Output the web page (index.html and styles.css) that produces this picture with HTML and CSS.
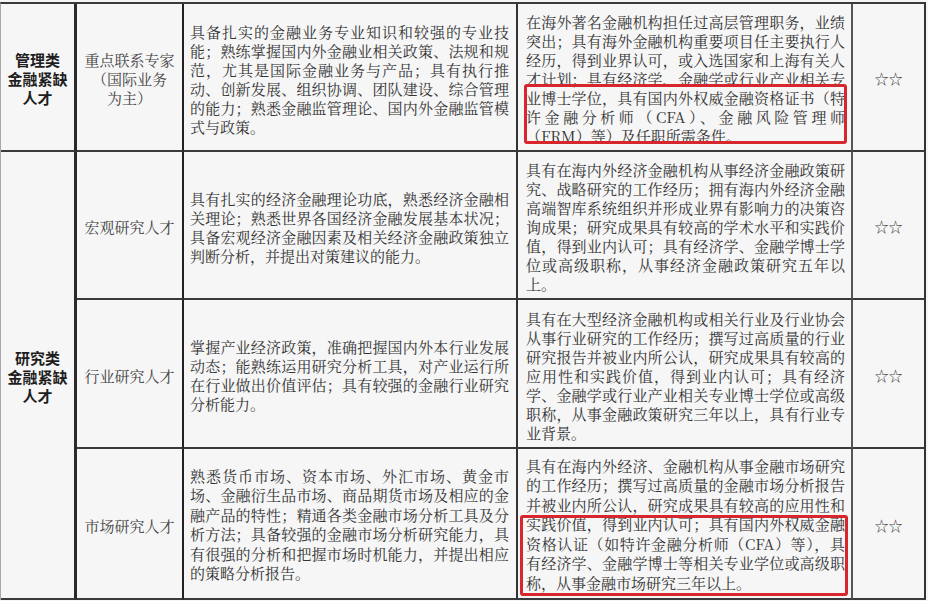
FILE: index.html
```html
<!DOCTYPE html>
<html lang="zh-CN">
<head>
<meta charset="utf-8">
<title>金融紧缺人才</title>
<link rel="stylesheet" href="styles.css">
</head>
<body>
<div class="sheet">
  <div class="cell cat"><span>管理类</span><span>金融紧缺</span><span>人才</span></div>
  <div class="cell name"><span>重点联系专家</span><span>（国际业务</span><span>为主）</span></div>
  <div class="cell desc">
    <span class="ln">具备扎实的金融业务专业知识和较强的专业技</span>
    <span class="ln">能；熟练掌握国内外金融业相关政策、法规和规</span>
    <span class="ln">范，尤其是国际金融业务与产品；具有执行推</span>
    <span class="ln">动、创新发展、组织协调、团队建设、综合管理</span>
    <span class="ln">的能力；熟悉金融监管理论、国内外金融监管模</span>
    <span class="ln end">式与政策。</span>
  </div>
  <div class="cell req">
    <span class="ln">在海外著名金融机构担任过高层管理职务，业绩</span>
    <span class="ln">突出；具有海外金融机构重要项目任主要执行人</span>
    <span class="ln">经历，得到业界认可，或入选国家和上海有关人</span>
    <span class="ln">才计划；具有经济学、金融学或行业产业相关专</span>
    <div class="mark mark-a">
      <span class="ln">业博士学位，具有国内外权威金融资格证书（特</span>
      <span class="ln">许金融分析师（CFA）、金融风险管理师</span>
      <span class="ln end">（FRM）等）及任职所需条件。</span>
    </div>
  </div>
  <div class="cell star">☆☆</div>

  <div class="cell cat tall"><span>研究类</span><span>金融紧缺</span><span>人才</span></div>
  <div class="cell name"><span>宏观研究人才</span></div>
  <div class="cell desc">
    <span class="ln">具有扎实的经济金融理论功底，熟悉经济金融相</span>
    <span class="ln">关理论；熟悉世界各国经济金融发展基本状况；</span>
    <span class="ln">具备宏观经济金融因素及相关经济金融政策独立</span>
    <span class="ln end">判断分析，并提出对策建议的能力。</span>
  </div>
  <div class="cell req">
    <span class="ln">具有在海内外经济金融机构从事经济金融政策研</span>
    <span class="ln">究、战略研究的工作经历；拥有海内外经济金融</span>
    <span class="ln">高端智库系统组织并形成业界有影响力的决策咨</span>
    <span class="ln">询成果；研究成果具有较高的学术水平和实践价</span>
    <span class="ln">值，得到业内认可；具有经济学、金融学博士学</span>
    <span class="ln">位或高级职称，从事经济金融政策研究五年以</span>
    <span class="ln end">上。</span>
  </div>
  <div class="cell star">☆☆</div>

  <div class="cell name"><span>行业研究人才</span></div>
  <div class="cell desc">
    <span class="ln">掌握产业经济政策，准确把握国内外本行业发展</span>
    <span class="ln">动态；能熟练运用研究分析工具，对产业运行所</span>
    <span class="ln">在行业做出价值评估；具有较强的金融行业研究</span>
    <span class="ln end">分析能力。</span>
  </div>
  <div class="cell req">
    <span class="ln">具有在大型经济金融机构或相关行业及行业协会</span>
    <span class="ln">从事行业研究的工作经历；撰写过高质量的行业</span>
    <span class="ln">研究报告并被业内所公认，研究成果具有较高的</span>
    <span class="ln">应用性和实践价值，得到业内认可；具有经济</span>
    <span class="ln">学、金融学或行业产业相关专业博士学位或高级</span>
    <span class="ln">职称，从事金融政策研究三年以上，具有行业专</span>
    <span class="ln end">业背景。</span>
  </div>
  <div class="cell star">☆☆</div>

  <div class="cell name"><span>市场研究人才</span></div>
  <div class="cell desc loose">
    <span class="ln">熟悉货币市场、资本市场、外汇市场、黄金市</span>
    <span class="ln">场、金融衍生品市场、商品期货市场及相应的金</span>
    <span class="ln">融产品的特性；精通各类金融市场分析工具及分</span>
    <span class="ln">析方法；具备较强的金融市场分析研究能力，具</span>
    <span class="ln">有很强的分析和把握市场时机能力，并提出相应</span>
    <span class="ln end">的策略分析报告。</span>
  </div>
  <div class="cell req loose">
    <span class="ln">具有在海内外经济、金融机构从事金融市场研究</span>
    <span class="ln">的工作经历；撰写过高质量的金融市场分析报告</span>
    <span class="ln">并被业内所公认，研究成果具有较高的应用性和</span>
    <div class="mark mark-b">
      <span class="ln">实践价值，得到业内认可；具有国内外权威金融</span>
      <span class="ln">资格认证（如特许金融分析师（CFA）等），具</span>
      <span class="ln">有经济学、金融学博士等相关专业学位或高级职</span>
      <span class="ln end">称，从事金融市场研究三年以上。</span>
    </div>
  </div>
  <div class="cell star">☆☆</div>
</div>
</body>
</html>
```

FILE: styles.css
```css
html, body {
  margin: 0;
  padding: 0;
  background: #f6f6f6;
}

body {
  padding-top: 2px;
  font-family: "Noto Serif CJK SC", "Noto Sans CJK SC", "Liberation Serif", serif;
  color: #333;
  font-size: 15px;
  line-height: 19px;
}

.sheet {
  display: grid;
  grid-template-columns: 76px 107px 334px 335px 73px;
  grid-template-rows: 148px 148px 149px 151px;
  border-top: 2px solid #3a3a3a;
  border-left: 1px solid #a8a8a8;
  width: 925px;
}

.cell {
  box-sizing: border-box;
  border-right: 2px solid #333;
  border-bottom: 2px solid #3a3a3a;
  display: flex;
  flex-direction: column;
  justify-content: center;
  padding-top: 3px;
}

.cat {
  border-right: 3px solid #2a2a2a;
  align-items: center;
  font-family: "Noto Sans CJK SC", "Liberation Sans", sans-serif;
  font-weight: 700;
  color: #1e1e1e;
  text-align: center;
}

.cat span, .name span {
  display: block;
}

.tall {
  grid-row: 2 / span 3;
}

.name {
  align-items: center;
  text-align: center;
  color: #444;
  border-right-color: #222;
}

.desc {
  padding-left: 6px;
  padding-right: 7px;
}

.req {
  padding-left: 8px;
  padding-right: 6px;
  border-right-color: #555;
}

.loose {
  line-height: 19.5px;
  padding-top: 1px;
}

.ln {
  display: block;
  text-align: justify;
  text-align-last: justify;
}

.ln.end {
  text-align-last: left;
}

.star {
  align-items: center;
  font-family: "Noto Sans CJK SC", "DejaVu Sans", sans-serif;
  font-size: 14px;
  color: #444;
}

.mark {
  position: relative;
}

.mark::after {
  content: "";
  position: absolute;
  border: 3px solid #d8272c;
  border-radius: 3px;
  pointer-events: none;
}

.mark-a::after {
  top: -4px;
  bottom: 1px;
  left: -2px;
  right: -2px;
}

.mark-b::after {
  top: 1px;
  bottom: -4px;
  left: -6px;
  right: -3px;
}
```
